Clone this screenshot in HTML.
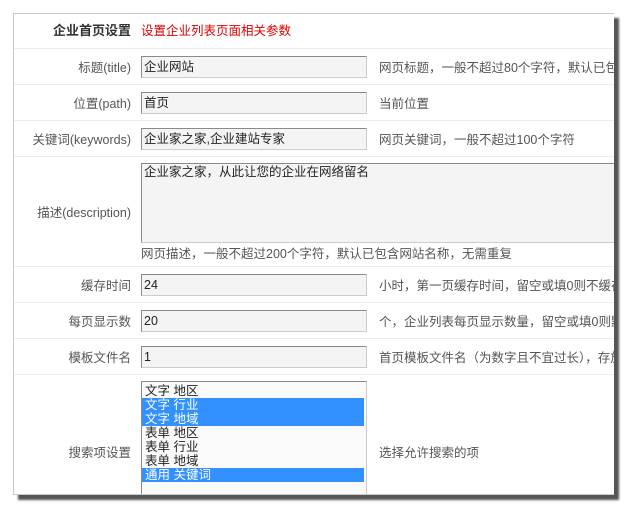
<!DOCTYPE html>
<html><head><meta charset="utf-8"><style>
body{margin:0;width:629px;height:508px;background:#fff;font-family:"Liberation Sans","Noto Sans CJK SC",sans-serif;font-size:12px;color:#444;position:relative;overflow:hidden}
.panel{position:absolute;left:13px;top:13px;width:600px;height:480px;border:1px solid #c8c8c8;border-right:none;background:#fff;box-shadow:5px 5px 2px #555;overflow:hidden}
.clip{position:absolute;left:0;top:0;width:600px;height:480px;overflow:hidden}
.sep{position:absolute;left:0;width:600px;border-top:1px solid #ececec}
.lab{position:absolute;right:483px;text-align:right;white-space:nowrap;color:#555;font-size:12.5px;line-height:20px}
.inp{position:absolute;left:127px;width:222px;height:20px;border:1px solid #8a8a8a;border-right-color:#ccc;border-bottom-color:#ccc;background:#f4f4f4;color:#222;line-height:20px;padding-left:2px;font-size:12.5px}
.help{position:absolute;left:365px;white-space:nowrap;color:#555;font-size:12.5px;line-height:20px}
.sel{position:absolute;left:127px;top:367px;width:224px;height:113px;border:1px solid #8a8a8a;border-right-color:#ccc;background:#fafafa;color:#222;font-size:12.5px}
.opt{height:14px;line-height:14px;padding-left:3px;margin-right:2px;white-space:nowrap;overflow:hidden}
.hi{background:#3391ff;color:#fff}
</style></head><body>
<div class="panel"><div class="clip">
<div class="lab" style="top:7px;font-weight:bold;color:#333;font-size:13px">企业首页设置</div>
<div style="position:absolute;left:127px;top:7px;color:#d00;font-size:12.5px;line-height:20px">设置企业列表页面相关参数</div>
<div class="sep" style="top:34px"></div>
<div class="lab" style="top:44px">标题(title)</div><div class="inp" style="top:42px">企业网站</div><div class="help" style="top:44px">网页标题，一般不超过80个字符，默认已包含网站名称</div>
<div class="sep" style="top:70px"></div>
<div class="lab" style="top:80px">位置(path)</div><div class="inp" style="top:78px">首页</div><div class="help" style="top:80px">当前位置</div>
<div class="sep" style="top:106px"></div>
<div class="lab" style="top:116px">关键词(keywords)</div><div class="inp" style="top:114px">企业家之家,企业建站专家</div><div class="help" style="top:116px">网页关键词，一般不超过100个字符</div>
<div class="sep" style="top:142px"></div>
<div class="lab" style="top:189px">描述(description)</div>
<div class="inp" style="top:149px;width:480px;height:78px;line-height:17px">企业家之家，从此让您的企业在网络留名</div>
<div style="position:absolute;left:127px;top:230px;color:#555;font-size:12.5px;white-space:nowrap;line-height:20px">网页描述，一般不超过200个字符，默认已包含网站名称，无需重复</div>
<div class="sep" style="top:252px"></div>
<div class="lab" style="top:262px">缓存时间</div><div class="inp" style="top:260px">24</div><div class="help" style="top:262px">小时，第一页缓存时间，留空或填0则不缓存</div>
<div class="sep" style="top:288px"></div>
<div class="lab" style="top:298px">每页显示数</div><div class="inp" style="top:296px">20</div><div class="help" style="top:298px">个，企业列表每页显示数量，留空或填0则默认</div>
<div class="sep" style="top:324px"></div>
<div class="lab" style="top:334px">模板文件名</div><div class="inp" style="top:332px">1</div><div class="help" style="top:334px">首页模板文件名（为数字且不宜过长），存放</div>
<div class="sep" style="top:360px"></div>
<div class="lab" style="top:429px">搜索项设置</div>
<div class="sel" style="padding-top:2px">
<div class="opt">文字 地区</div><div class="opt hi">文字 行业</div><div class="opt hi">文字 地域</div><div class="opt">表单 地区</div><div class="opt">表单 行业</div><div class="opt">表单 地域</div><div class="opt hi">通用 关键词</div>
</div>
<div class="help" style="top:429px">选择允许搜索的项</div>
</div></div>
</body></html>
